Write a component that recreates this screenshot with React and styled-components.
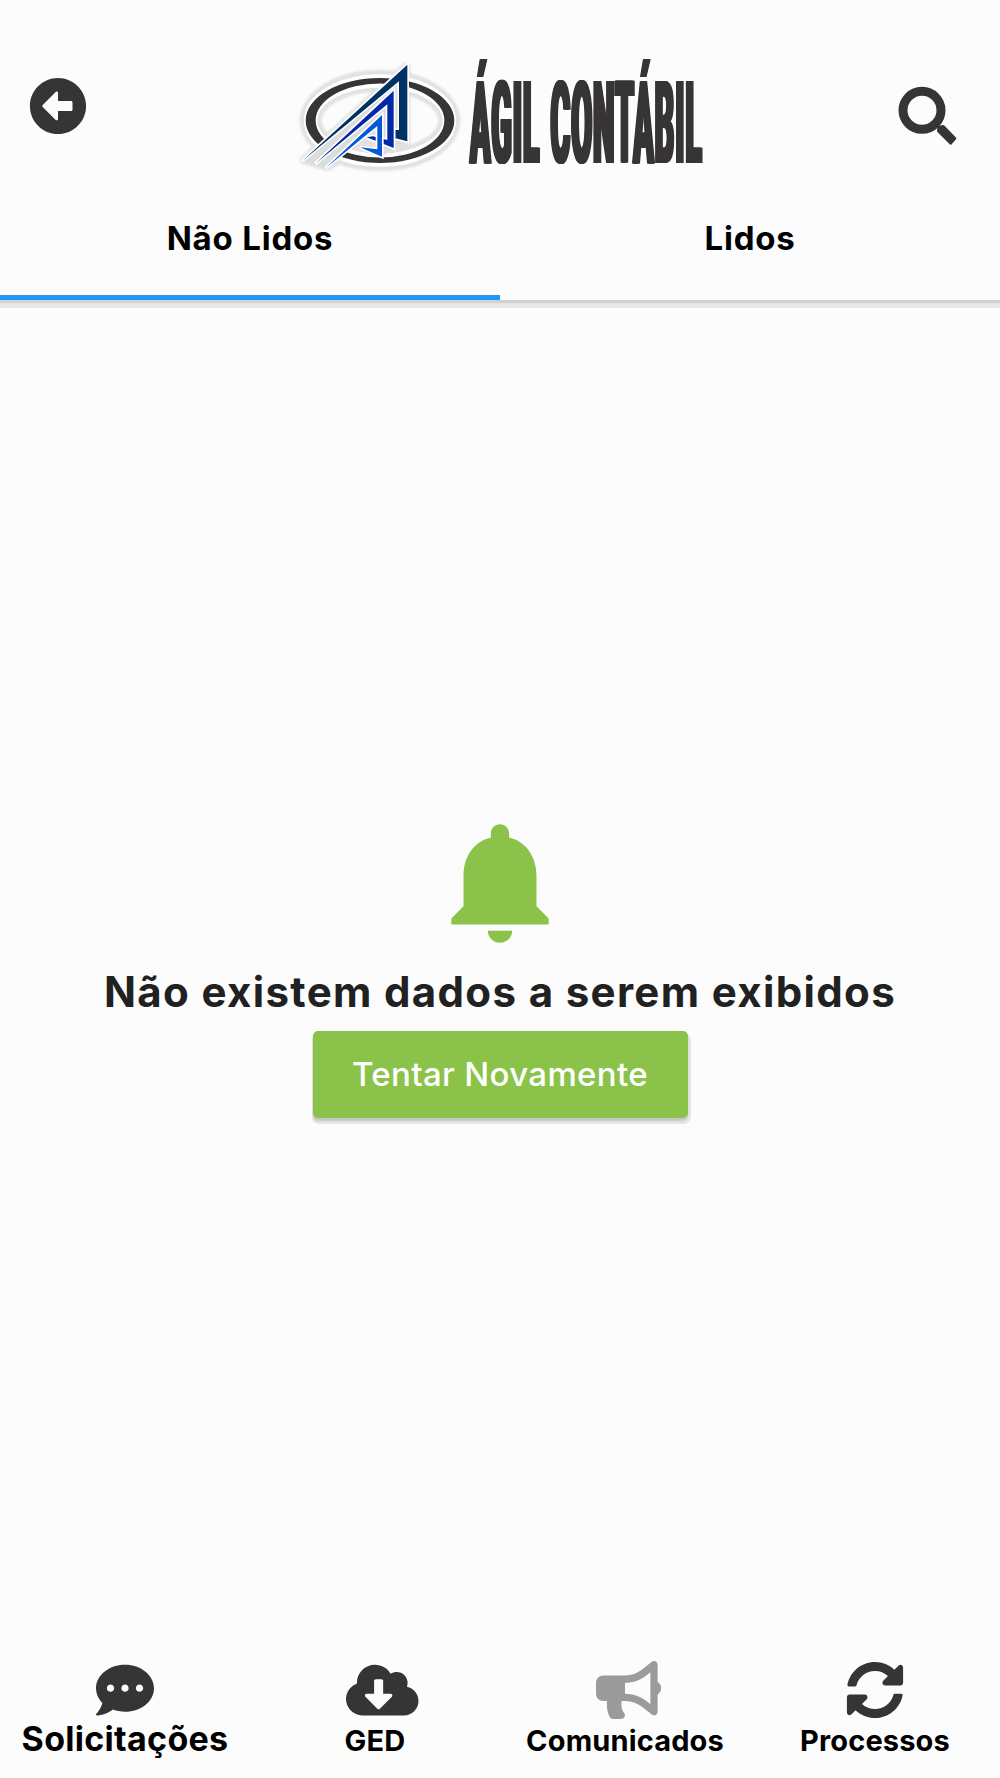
import React from "react";
import styled, { createGlobalStyle } from "styled-components";
import {
  FaArrowAltCircleLeft,
  FaBullhorn,
  FaCloudDownloadAlt,
  FaCommentDots,
  FaSyncAlt,
} from "react-icons/fa";
import { MdNotifications } from "react-icons/md";

const navItems = [
  { label: "Solicitações", icon: FaCommentDots, width: 58, large: true },
  { label: "GED", icon: FaCloudDownloadAlt, width: 72.5 },
  { label: "Comunicados", icon: FaBullhorn, width: 65.25, muted: true },
  { label: "Processos", icon: FaSyncAlt, width: 58 },
];

const Emblem = () => (
  <EmblemSvg viewBox="0 0 540 390" aria-hidden="true">
    <defs>
      <filter id="halo" x="-10%" y="-10%" width="120%" height="120%">
        <feGaussianBlur stdDeviation="3" />
      </filter>
    </defs>
    {/* soft halo */}
    <g fill="none" stroke="#e2e2e2" strokeLinejoin="round" filter="url(#halo)">
      <ellipse cx="270" cy="211.5" rx="208" ry="119" strokeWidth="66" />
      <path
        d="M42 330 L348 50 V274 L311 294 L276 316 L210 292 L112 350 Z"
        fill="#e2e2e2"
        strokeWidth="26"
      />
    </g>
    <ellipse cx="270" cy="211.5" rx="208" ry="119" fill="none" stroke="#fff" strokeWidth="40" />
    <path
      fill="#373435"
      fillRule="evenodd"
      d="M47 211.5a223 127.5 0 1 0 446 0a223 127.5 0 1 0 -446 0Z M77 211.5a193 111 0 1 0 386 0a193 111 0 1 0 -386 0Z"
    />
    {/* the three "A" blades cut through the ring */}
    <path
      d="M36 334 L352 44 V274 L311 294 L276 320 L210 292 L262 298 V232 L107 354 Z"
      fill="#dcdcdc"
    />
    <g stroke="#fff" strokeWidth="10" strokeMiterlimit="3" paintOrder="stroke">
      <path fill="#003263" d="M36 334 L352 44 V274 L316 265 V240 H327 V94 Z" />
      <path fill="#0029a5" d="M76 341 L311 122 V294 L230 262 L249 259 L292 270 V163 Z" />
      <path fill="#0758d3" d="M107 354 L276 195 V320 L210 292 L262 298 V228 Z" />
    </g>
  </EmblemSvg>
);

const SearchIcon = () => (
  <SearchSvg viewBox="0 0 180 180" aria-label="Buscar">
    <circle cx="72" cy="73" r="57" fill="none" stroke="#373435" strokeWidth="27" />
    <path
      d="M122 123 L136 121 L171 157 L158 172 L121 135 Z"
      fill="#373435"
      stroke="#373435"
      strokeWidth="8"
      strokeLinejoin="round"
    />
  </SearchSvg>
);

const App = () => {
  return (
    <Screen>
      <GlobalStyle />
      <Header>
        <TopBar>
          <BackButton aria-label="Voltar">
            <FaArrowAltCircleLeft />
          </BackButton>
          <Brand>
            <Emblem />
            <Wordmark>ÁGIL CONTÁBIL</Wordmark>
          </Brand>
          <SearchIcon />
        </TopBar>
        <Tabs>
          <Tab $active>Não Lidos</Tab>
          <Tab>Lidos</Tab>
        </Tabs>
      </Header>
      <Empty>
        <MdNotifications />
        <Message>Não existem dados a serem exibidos</Message>
        <RetryButton>Tentar Novamente</RetryButton>
      </Empty>
      <BottomNav>
        {navItems.map(({ label, icon: Icon, width, large, muted }) => (
          <NavItem key={label}>
            <NavIcon $width={width} $muted={muted}>
              <Icon />
            </NavIcon>
            <NavLabel $large={large}>{label}</NavLabel>
          </NavItem>
        ))}
      </BottomNav>
    </Screen>
  );
};

const GlobalStyle = createGlobalStyle`
  * {
    box-sizing: border-box;
  }
  body {
    margin: 0;
    background: #fcfcfc;
    font-family: Inter, "Liberation Sans", sans-serif;
  }
  button {
    font-family: inherit;
    border: none;
    padding: 0;
  }
`;

const Screen = styled.div`
  display: flex;
  flex-direction: column;
  width: 1000px;
  height: 1778px;
  overflow: hidden;
`;

const Header = styled.header`
  flex: none;
  height: 300px;
  display: flex;
  flex-direction: column;
  box-shadow: 0 3px 1px #d2d2d2, 0 8px 0 #e7e7e7;
`;

const TopBar = styled.div`
  height: 200px;
  display: flex;
  align-items: flex-start;
  padding: 40px 40px 0 29px;
`;

const BackButton = styled.button`
  display: flex;
  margin-top: 37px;
  background: none;
  color: #373435;
  font-size: 58px;
`;

const Brand = styled.div`
  display: flex;
  align-items: flex-start;
  width: 430px;
  margin-left: 203px;
`;

const EmblemSvg = styled.svg`
  flex: none;
  width: 180px;
  height: 130px;
  margin-top: 10px;
`;

/* condensed by scaling; the side shadows thicken only the vertical stems */
const Wordmark = styled.span`
  flex: none;
  width: 234px;
  height: 136px;
  line-height: 136px;
  margin-top: 16px;
  color: #373435;
  font-family: Roboto, "Liberation Sans", sans-serif;
  font-size: 115px;
  font-weight: 900;
  letter-spacing: 4px;
  word-spacing: 6px;
  white-space: nowrap;
  text-shadow: 3px 0 #373435, -3px 0 #373435, 5px 0 #373435, -5px 0 #373435;
  transform: scaleX(0.262);
  transform-origin: left center;
`;

const SearchSvg = styled.svg`
  width: 60px;
  height: 60px;
  margin: 46px 0 0 178px;
`;

const Tabs = styled.nav`
  flex: 1;
  display: grid;
  grid-template-columns: 1fr 1fr;
`;

const Tab = styled.button`
  padding-bottom: ${(props) => (props.$active ? "19px" : "24px")};
  background: none;
  border-bottom: ${(props) => (props.$active ? "5px solid #2196f3" : "none")};
  color: #000;
  font-size: 33px;
  font-weight: 700;
  letter-spacing: 0.8px;
`;

const Empty = styled.main`
  flex: 1;
  display: flex;
  flex-direction: column;
  align-items: center;
  padding-top: 509px;

  svg {
    width: 146px;
    height: 146px;
    color: #8bc34a;
  }
`;

const Message = styled.p`
  margin: 12px 0 0;
  color: #212121;
  font-size: 42px;
  font-weight: 700;
  line-height: 50px;
  letter-spacing: 1.35px;
  white-space: nowrap;
`;

const RetryButton = styled.button`
  width: 375px;
  height: 87px;
  margin-top: 14px;
  padding-bottom: 2px;
  border-radius: 5px;
  background: #8bc34a;
  color: #fff;
  font-size: 33px;
  font-weight: 500;
  letter-spacing: 0.35px;
  box-shadow: 0 3px 2px #c6c6c6, 1px 4px 0 2px #e7e7e7;
`;

const BottomNav = styled.nav`
  flex: none;
  height: 117px;
  display: grid;
  grid-template-columns: repeat(4, 1fr);
`;

const NavItem = styled.div`
  display: flex;
  flex-direction: column;
  align-items: center;
`;

const NavIcon = styled.div`
  display: flex;
  width: 58px;
  height: 58px;
  color: ${(props) => (props.$muted ? "#9b9b9b" : "#373435")};

  /* wide glyphs spill over the right of the box */
  svg {
    flex: none;
    width: ${(props) => props.$width}px;
    height: 58px;
  }
`;

const NavLabel = styled.span`
  line-height: ${(props) => (props.$large ? "39px" : "44px")};
  color: #000;
  font-size: ${(props) => (props.$large ? "34px" : "29px")};
  font-weight: 700;
  letter-spacing: ${(props) => (props.$large ? "0.3px" : "0.15px")};
`;

export default App;
